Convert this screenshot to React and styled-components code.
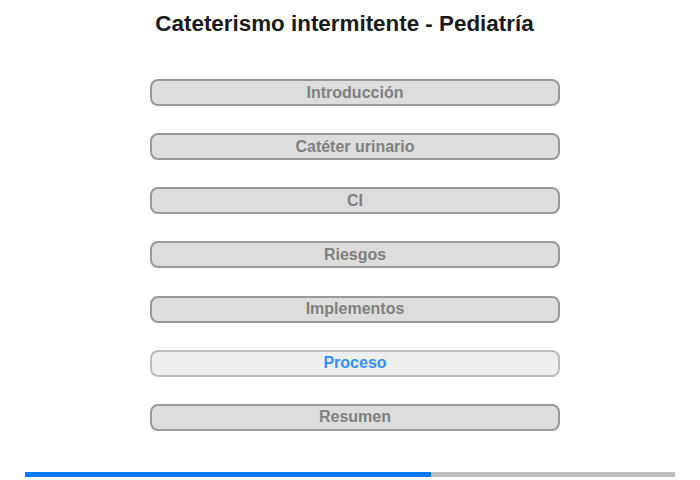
import React from "react";
import styled, { createGlobalStyle } from "styled-components";

const Global = createGlobalStyle`
  html, body { margin: 0; padding: 0; background: #fff; }
  body { font-family: "Liberation Sans", Arial, sans-serif; }
`;

const Page = styled.div`
  width: 700px;
  height: 480px;
  display: flex;
  flex-direction: column;
  box-sizing: border-box;
  padding-top: 10px;
`;

const Title = styled.h1`
  margin: 0;
  padding-right: 11px;
  font-size: 22.4px;
  line-height: 27px;
  font-weight: bold;
  color: #1a1a1a;
  text-align: center;
`;

const Menu = styled.nav`
  display: flex;
  flex-direction: column;
  gap: 27.17px;
  padding-left: 150px;
  margin-top: 42px;
`;

const Item = styled.button`
  width: 410px;
  height: 27px;
  box-sizing: border-box;
  border-radius: 8px;
  border: 2px solid ${(p) => (p.$active ? "#bbbbbb" : "#999999")};
  background: ${(p) => (p.$active ? "#eeeeee" : "#dddddd")};
  color: ${(p) => (p.$active ? "#3390ff" : "#808080")};
  font-family: "Liberation Sans", Arial, sans-serif;
  font-size: 16px;
  font-weight: bold;
  padding: 0;
  display: flex;
  align-items: center;
  justify-content: center;
  cursor: pointer;
`;

const Progress = styled.div`
  margin: 41px 0 0 25px;
  width: 650px;
  height: 5px;
  background: #c0c0c0;
  display: flex;
`;

const Fill = styled.div`
  height: 100%;
  background: #0077ff;
`;

const items = [
  "Introducción",
  "Catéter urinario",
  "CI",
  "Riesgos",
  "Implementos",
  "Proceso",
  "Resumen",
];

export default function App() {
  return (
    <>
      <Global />
      <Page>
        <Title>Cateterismo intermitente - Pediatría</Title>
        <Menu>
          {items.map((t) => (
            <Item key={t} $active={t === "Proceso"}>
              {t}
            </Item>
          ))}
        </Menu>
        <Progress>
          <Fill style={{ width: `${(406 / 650) * 100}%` }} />
        </Progress>
      </Page>
    </>
  );
}
